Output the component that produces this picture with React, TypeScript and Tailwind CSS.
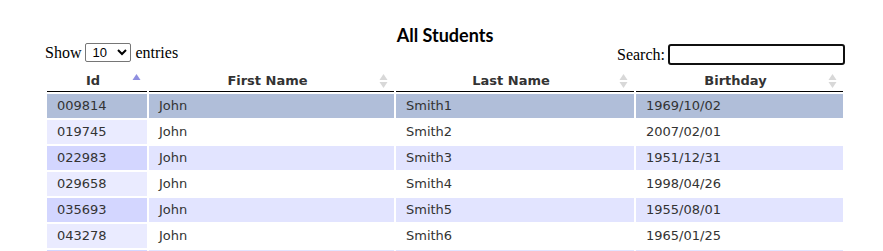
import React from 'react';

type Student = { id: string; first: string; last: string; birthday: string };

const students: Student[] = [
  { id: '009814', first: 'John', last: 'Smith1', birthday: '1969/10/02' },
  { id: '019745', first: 'John', last: 'Smith2', birthday: '2007/02/01' },
  { id: '022983', first: 'John', last: 'Smith3', birthday: '1951/12/31' },
  { id: '029658', first: 'John', last: 'Smith4', birthday: '1998/04/26' },
  { id: '035693', first: 'John', last: 'Smith5', birthday: '1955/08/01' },
  { id: '043278', first: 'John', last: 'Smith6', birthday: '1965/01/25' },
  { id: '051024', first: 'John', last: 'Smith7', birthday: '1972/06/14' },
];

const SortBoth: React.FC = () => (
  <svg className="absolute right-[6px] top-[calc(50%-8px)]" width="9" height="16" viewBox="0 0 9 16">
    <path d="M4.5 1 L8.5 7 L0.5 7 Z" fill="#d8d8d8" />
    <path d="M4.5 15 L8.5 9 L0.5 9 Z" fill="#d8d8d8" />
  </svg>
);

const SortAsc: React.FC = () => (
  <svg className="absolute right-[6px] top-[calc(50%-8px)]" width="9" height="16" viewBox="0 0 9 16">
    <path d="M4.5 1 L8.5 7 L0.5 7 Z" fill="#8f8fe0" />
  </svg>
);

const headers = [
  { label: 'Id', asc: true },
  { label: 'First Name', asc: false },
  { label: 'Last Name', asc: false },
  { label: 'Birthday', asc: false },
];

const App: React.FC = () => {
  return (
    <div className="min-h-screen bg-white">
      <div className="ml-[45px] w-[800px] pt-[24px]">
        <h1 className="text-center text-[18px] leading-[22px] font-bold text-black font-['Lato',sans-serif]">
          All Students
        </h1>

        <div className="flex items-start justify-between font-['Liberation_Serif',serif] text-[16px] leading-[19px] text-black mt-[-2px]">
          <label className="flex items-center gap-[4px] mt-[-1px]">
            Show
            <select
              defaultValue="10"
              className="w-[46px] h-[19px] border border-[#767676] rounded-[2px] bg-white text-[13px] font-['Liberation_Sans',sans-serif] pl-[2px]"
            >
              <option value="10">10</option>
              <option value="25">25</option>
              <option value="50">50</option>
              <option value="100">100</option>
            </select>
            entries
          </label>
          <label className="flex items-center gap-[3px]">
            Search:
            <input
              type="text"
              className="w-[177px] h-[21px] border-2 border-[#101010] rounded-[3px] outline-none"
            />
          </label>
        </div>

        <table className="mt-[3px] w-[800px] table-fixed border-separate border-spacing-[2px] font-['DejaVu_Sans','Verdana',sans-serif] text-[13px] text-[#333]">
          <colgroup>
            <col className="w-[100px]" />
            <col className="w-[245px]" />
            <col className="w-[238px]" />
            <col className="w-[207px]" />
          </colgroup>
          <thead>
            <tr>
              {headers.map((h) => (
                <th
                  key={h.label}
                  className="relative pt-[3px] pb-[3px] pl-[10px] pr-[18px] leading-[15px] font-bold text-center border-b border-black text-[#333]"
                >
                  {h.label}
                  {h.asc ? <SortAsc /> : <SortBoth />}
                </th>
              ))}
            </tr>
          </thead>
          <tbody>
            {students.map((s, i) => {
              const selected = i === 0;
              const odd = i % 2 === 0;
              const sortedBg = selected ? 'bg-[#b0bed9]' : odd ? 'bg-[#d3d6ff]' : 'bg-[#eaebff]';
              const rowBg = selected ? 'bg-[#b0bed9]' : odd ? 'bg-[#e2e4ff]' : 'bg-white';
              return (
                <tr key={s.id}>
                  <td className={`${sortedBg} px-[10px] py-[3px] leading-[18px]`}>{s.id}</td>
                  <td className={`${rowBg} px-[10px] py-[3px] leading-[18px]`}>{s.first}</td>
                  <td className={`${rowBg} px-[10px] py-[3px] leading-[18px]`}>{s.last}</td>
                  <td className={`${rowBg} px-[10px] py-[3px] leading-[18px]`}>{s.birthday}</td>
                </tr>
              );
            })}
          </tbody>
        </table>
      </div>
    </div>
  );
};

export default App;
